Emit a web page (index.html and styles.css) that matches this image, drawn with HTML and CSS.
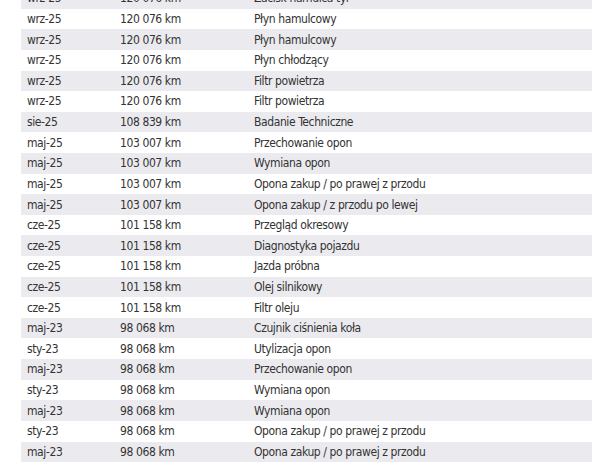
FILE: index.html
```html
<!DOCTYPE html>
<html lang="pl">
<head>
<meta charset="utf-8">
<link rel="stylesheet" href="styles.css">
</head>
<body>
<div class="table">
  <div class="row"><span>wrz-25</span><span>120 076 km</span><span>Zacisk hamulca tył</span></div>
  <div class="row"><span>wrz-25</span><span>120 076 km</span><span>Płyn hamulcowy</span></div>
  <div class="row"><span>wrz-25</span><span>120 076 km</span><span>Płyn hamulcowy</span></div>
  <div class="row"><span>wrz-25</span><span>120 076 km</span><span>Płyn chłodzący</span></div>
  <div class="row"><span>wrz-25</span><span>120 076 km</span><span>Filtr powietrza</span></div>
  <div class="row"><span>wrz-25</span><span>120 076 km</span><span>Filtr powietrza</span></div>
  <div class="row"><span>sie-25</span><span>108 839 km</span><span>Badanie Techniczne</span></div>
  <div class="row"><span>maj-25</span><span>103 007 km</span><span>Przechowanie opon</span></div>
  <div class="row"><span>maj-25</span><span>103 007 km</span><span>Wymiana opon</span></div>
  <div class="row"><span>maj-25</span><span>103 007 km</span><span>Opona zakup / po prawej z przodu</span></div>
  <div class="row"><span>maj-25</span><span>103 007 km</span><span>Opona zakup / z przodu po lewej</span></div>
  <div class="row"><span>cze-25</span><span>101 158 km</span><span>Przegląd okresowy</span></div>
  <div class="row"><span>cze-25</span><span>101 158 km</span><span>Diagnostyka pojazdu</span></div>
  <div class="row"><span>cze-25</span><span>101 158 km</span><span>Jazda próbna</span></div>
  <div class="row"><span>cze-25</span><span>101 158 km</span><span>Olej silnikowy</span></div>
  <div class="row"><span>cze-25</span><span>101 158 km</span><span>Filtr oleju</span></div>
  <div class="row"><span>maj-23</span><span>98 068 km</span><span>Czujnik ciśnienia koła</span></div>
  <div class="row"><span>sty-23</span><span>98 068 km</span><span>Utylizacja opon</span></div>
  <div class="row"><span>maj-23</span><span>98 068 km</span><span>Przechowanie opon</span></div>
  <div class="row"><span>sty-23</span><span>98 068 km</span><span>Wymiana opon</span></div>
  <div class="row"><span>maj-23</span><span>98 068 km</span><span>Wymiana opon</span></div>
  <div class="row"><span>sty-23</span><span>98 068 km</span><span>Opona zakup / po prawej z przodu</span></div>
  <div class="row"><span>maj-23</span><span>98 068 km</span><span>Opona zakup / po prawej z przodu</span></div>
</div>
</body>
</html>
```
FILE: styles.css
```css
html, body {
  margin: 0;
  padding: 0;
  background: #ffffff;
  overflow: hidden;
}
.table {
  margin: -11.9px 0 0 21px;
  width: 571px;
  font-family: "DejaVu Sans Condensed", "DejaVu Sans", sans-serif;
  font-stretch: condensed;
  font-size: 12px;
  letter-spacing: -0.4px;
  color: #333333;
}
.row {
  display: grid;
  grid-template-columns: 93px 134px 1fr;
  height: 20.62px;
  align-items: center;
}
.row:nth-child(odd) {
  background: #ebebef;
}
.row span {
  padding-left: 6px;
  white-space: nowrap;
}
```
